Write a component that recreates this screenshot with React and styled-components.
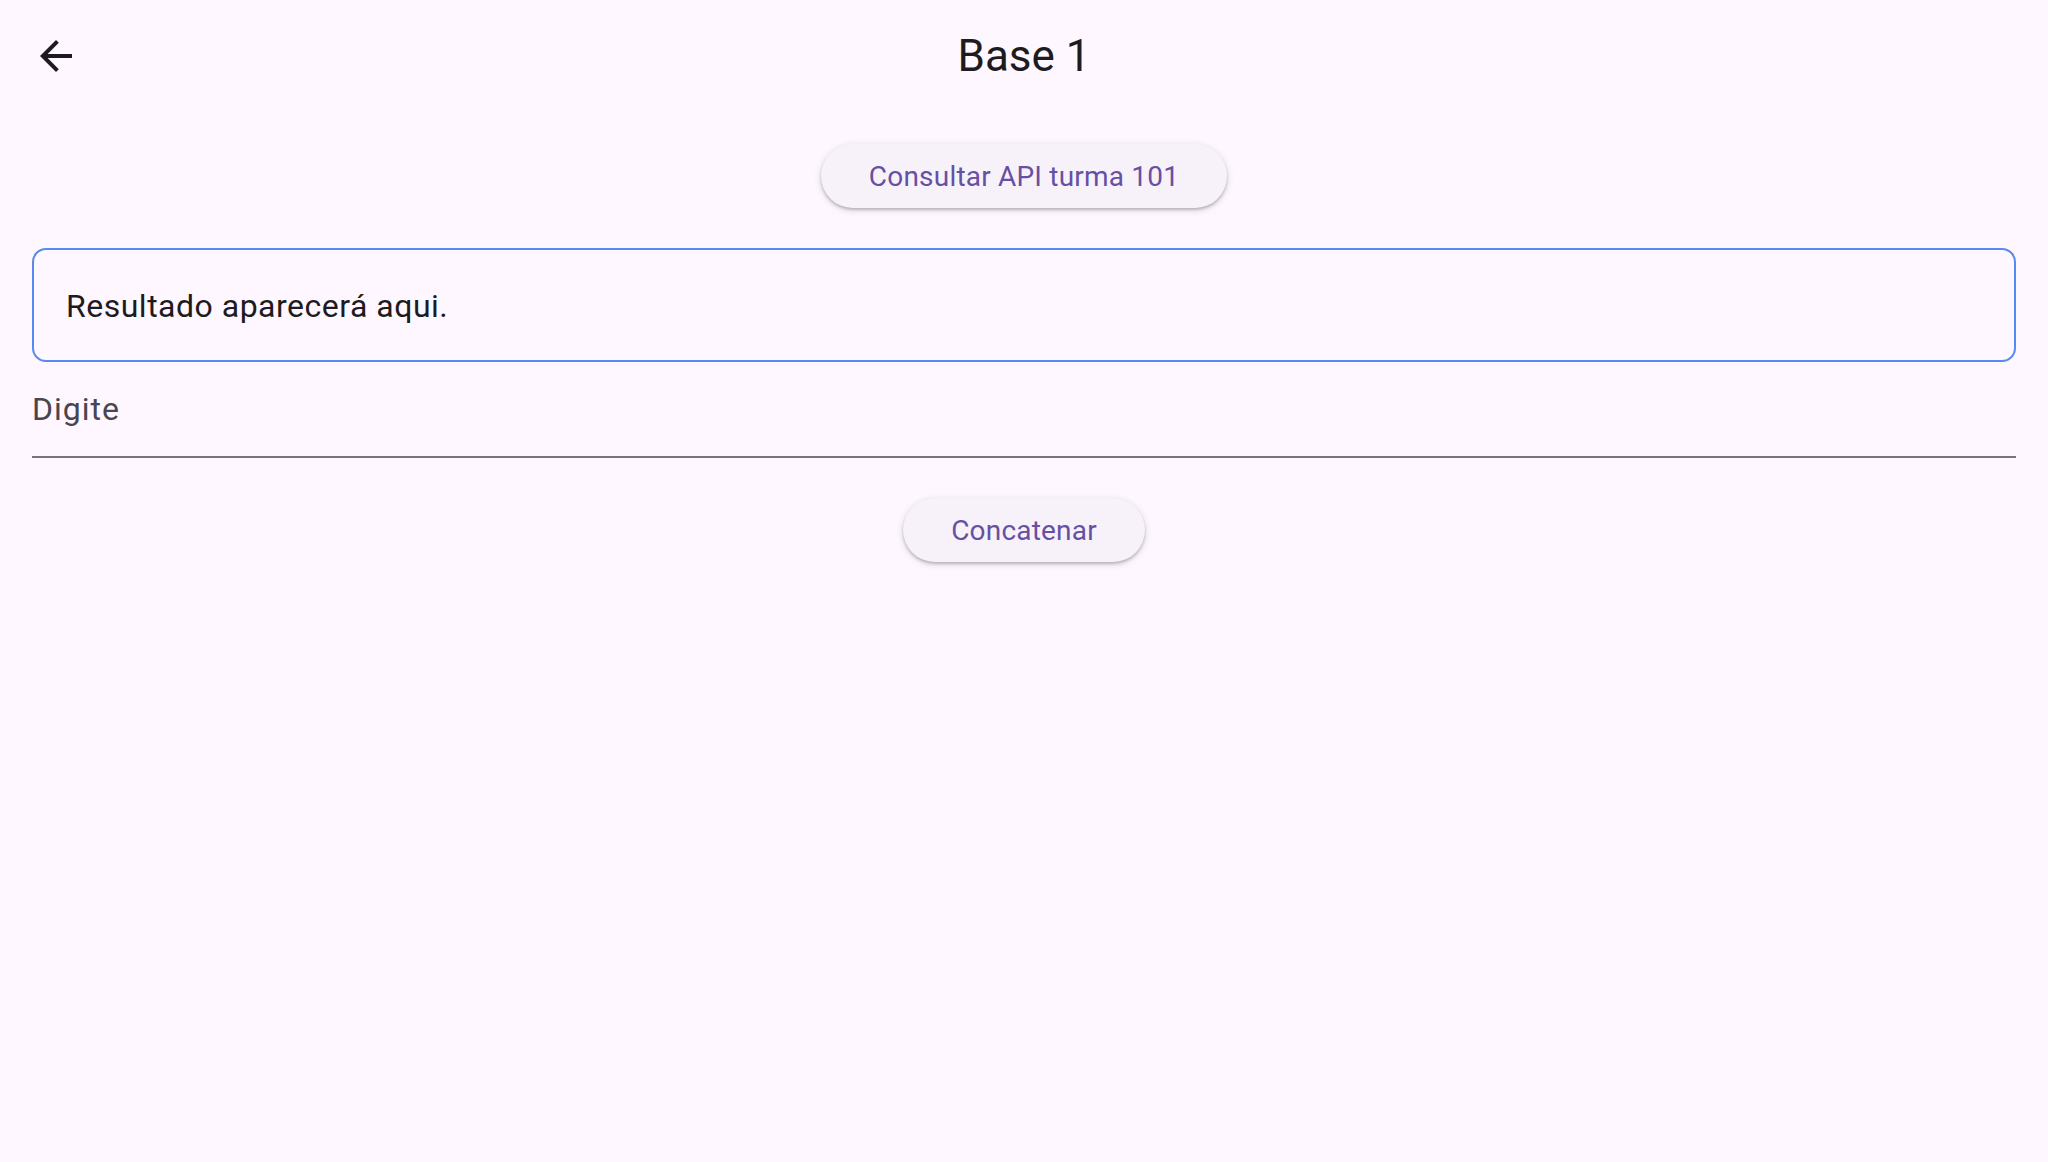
import React from 'react';
import styled, { createGlobalStyle } from 'styled-components';

const GlobalStyle = createGlobalStyle`
  html, body {
    margin: 0;
    padding: 0;
    background: #fef7ff;
  }
  body {
    font-family: Roboto, 'Liberation Sans', sans-serif;
    color: #1d1b20;
  }
`;

const Page = styled.div`
  min-height: 100vh;
  background: #fef7ff;
`;

const AppBar = styled.header`
  display: grid;
  grid-template-columns: 112px 1fr 112px;
  align-items: center;
  height: 112px;
`;

const BackButton = styled.button`
  display: flex;
  align-items: center;
  justify-content: center;
  width: 80px;
  height: 80px;
  margin-left: 16px;
  padding: 0;
  border: none;
  border-radius: 50%;
  background: transparent;
  color: #1d1b20;
  cursor: pointer;
`;

const Title = styled.h1`
  margin: 0;
  text-align: center;
  font-size: 44px;
  font-weight: 400;
  color: #1d1b20;
`;

const Body = styled.main`
  display: flex;
  flex-direction: column;
  align-items: center;
  padding: 32px;
`;

const PillButton = styled.button`
  height: 64px;
  padding: 0 48px;
  margin-bottom: ${({ $gap }) => $gap || 0}px;
  border: none;
  border-radius: 32px;
  background: #f7f2fa;
  color: #6750a4;
  font-family: Roboto, 'Liberation Sans', sans-serif;
  font-size: 28px;
  font-weight: 400;
  letter-spacing: 0.2px;
  box-shadow: 0 2px 3px rgba(0, 0, 0, 0.22), 0 2px 6px 2px rgba(0, 0, 0, 0.08);
  cursor: pointer;
`;

const ResultBox = styled.div`
  align-self: stretch;
  box-sizing: border-box;
  padding: 32px 32px 30px;
  border: 2px solid #588af0;
  border-radius: 14px;
  font-size: 32px;
  line-height: 48px;
  letter-spacing: 0.5px;
  color: #1d1b20;
`;

const Field = styled.label`
  align-self: stretch;
  box-sizing: border-box;
  height: 96px;
  padding-top: 23px;
  margin-bottom: 40px;
  border-bottom: 2px solid #79747e;
  font-size: 32px;
  line-height: 48px;
  letter-spacing: 1px;
  color: #49454f;
`;

const BackArrow = () => (
  <svg width="48" height="48" viewBox="0 0 24 24" fill="currentColor">
    <path d="M20 11H7.83l5.59-5.59L12 4l-8 8 8 8 1.41-1.41L7.83 13H20v-2z" />
  </svg>
);

export default function App() {
  return (
    <Page>
      <GlobalStyle />
      <AppBar>
        <BackButton aria-label="Voltar">
          <BackArrow />
        </BackButton>
        <Title>Base 1</Title>
        <span />
      </AppBar>
      <Body>
        <PillButton $gap={40}>Consultar API turma 101</PillButton>
        <ResultBox>Resultado aparecerá aqui.</ResultBox>
        <Field>Digite</Field>
        <PillButton>Concatenar</PillButton>
      </Body>
    </Page>
  );
}
